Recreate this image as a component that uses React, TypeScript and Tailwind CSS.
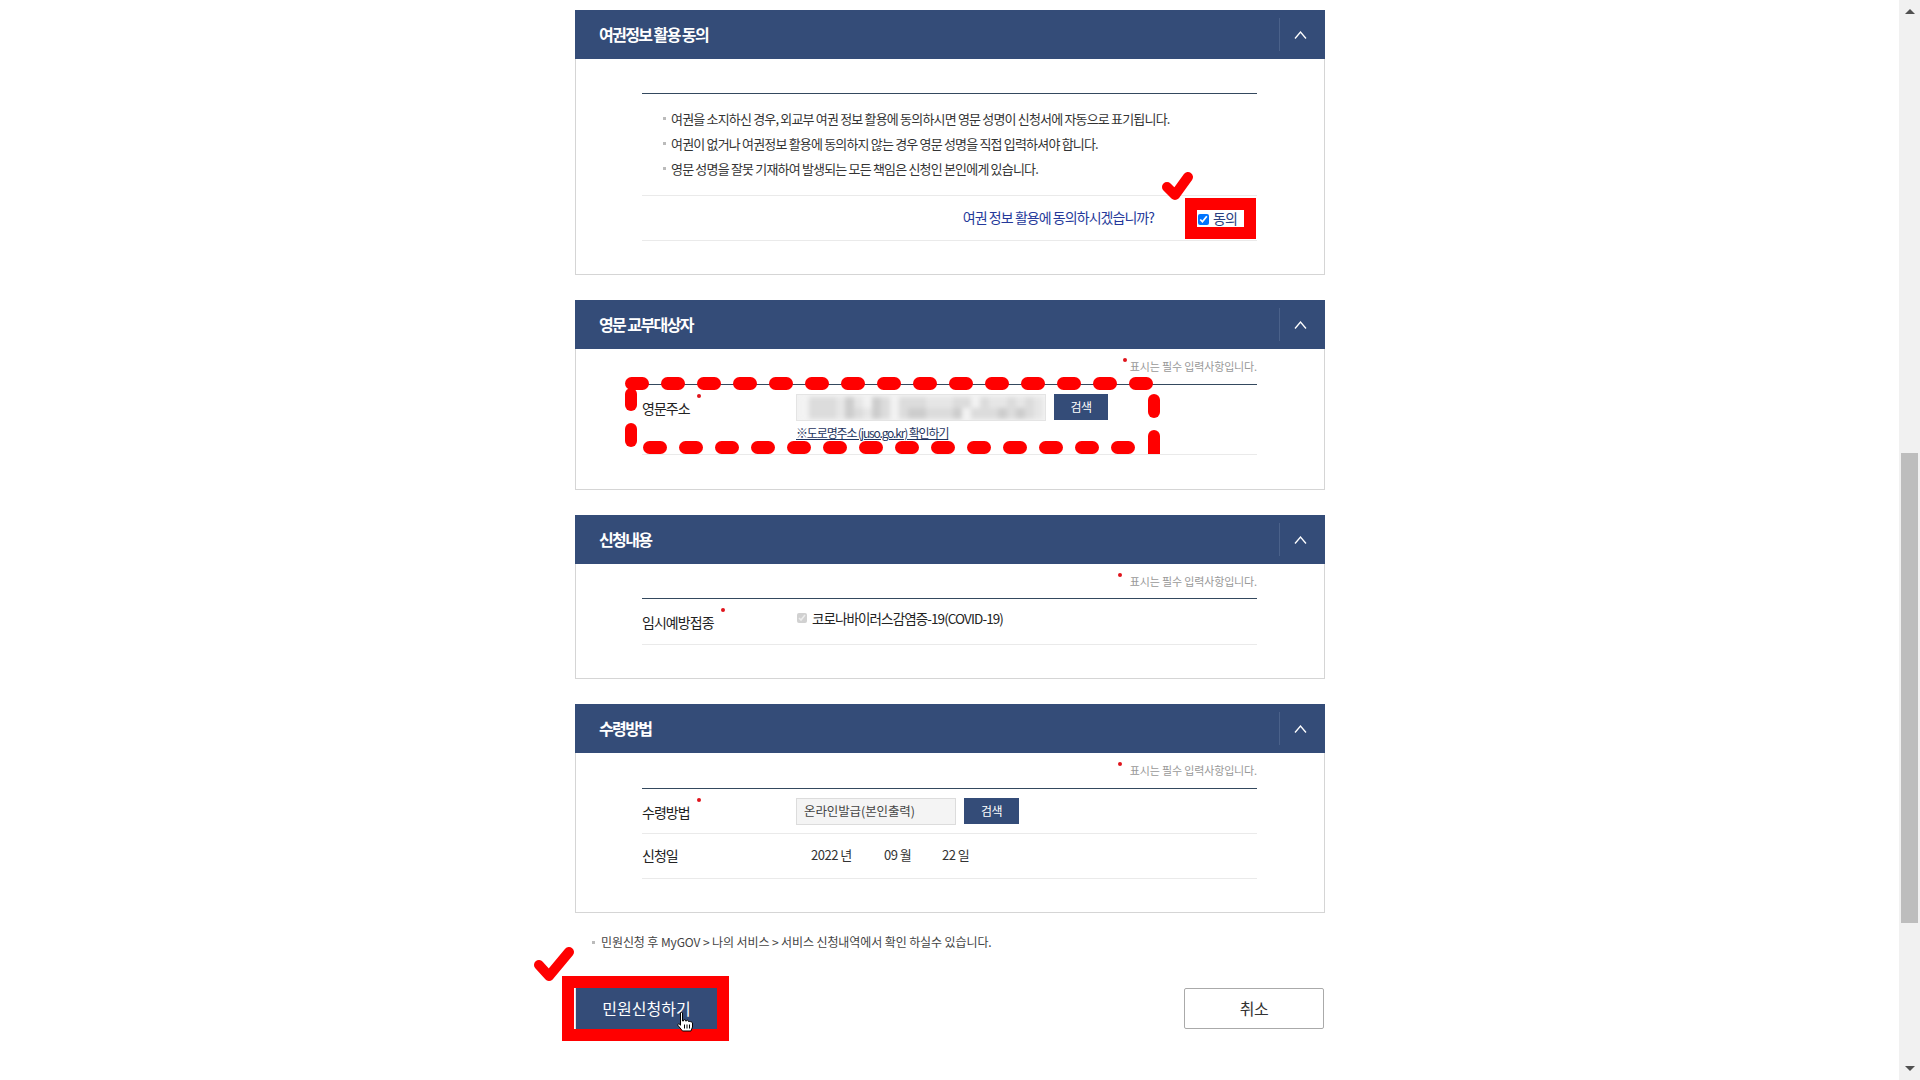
import React from 'react';

const NAVY = 'bg-[#344c78]';

const tone: Record<string, string> = {
  a: 'bg-[#f2f2f2]',
  b: 'bg-[#e6e6e6]',
  c: 'bg-[#dcdcdc]',
  d: 'bg-[#cdcdcd]',
};
const blurRows = ['acccbdbadcacccbbbccacbbcbcba', 'acccbdcbdcacddcccdacccdcdcba'];

function Panel({ title, children }: { title: string; children: React.ReactNode }) {
  return (
    <section className="w-[750px] mx-auto mb-[25px]">
      <div className={`${NAVY} h-[49px] flex items-center justify-between`}>
        <h2 className="pl-6 pb-[2px] text-[16px] font-bold tracking-[-1.6px] text-white">{title}</h2>
        <div className="h-[33px] w-[46px] pr-[5px] border-l border-[#4a618a] flex items-center justify-center">
          <svg width="13" height="8" viewBox="0 0 13 8" fill="none" stroke="#fff" strokeWidth="1.3">
            <path d="M1 7.5L6.5 1L12 7.5" />
          </svg>
        </div>
      </div>
      <div className="border border-t-0 border-[#d5d5d5] pl-[66px] pr-[67px]">{children}</div>
    </section>
  );
}

function RequiredNote({ dotClass, height }: { dotClass: string; height: string }) {
  return (
    <div className={`${height} flex justify-end pt-[9px]`}>
      <span className="relative h-[16px] text-[11px] leading-[16px] tracking-[-0.14px] text-[#999]">
        <span className={`absolute top-[0px] w-[4px] h-[4px] rounded-full bg-[#e0141c] ${dotClass}`} />
        표시는 필수 입력사항입니다.
      </span>
    </div>
  );
}

function Label({ text, dotClass, className = '' }: { text: string; dotClass: string; className?: string }) {
  return (
    <span className={`relative w-[154px] shrink-0 text-[14px] leading-[20px] tracking-[-0.95px] text-[#222] ${className}`}>
      {text}
      {dotClass && <span className={`absolute top-[-4px] w-[4px] h-[4px] rounded-full bg-[#e0141c] ${dotClass}`} />}
    </span>
  );
}

function SearchButton({ className }: { className: string }) {
  return (
    <button className={`${NAVY} h-[26px] text-[12px] tracking-[-0.6px] text-white ${className}`}>검색</button>
  );
}

function Bullet({ text }: { text: string }) {
  return (
    <li className="h-[25px] flex items-center gap-[5px] pl-[21px] text-[13px] tracking-[-0.82px] text-[#333]">
      <span className="w-[3px] h-[3px] bg-[#bbb]" />
      {text}
    </li>
  );
}

function Check({ className, box, d }: { className: string; box: string; d: string }) {
  return (
    <svg className={`absolute ${className}`} viewBox={box} fill="none" stroke="#f00" strokeWidth="10" strokeLinecap="round" strokeLinejoin="round">
      <path d={d} />
    </svg>
  );
}

export default function App() {
  return (
    <div className="relative h-screen overflow-hidden flex bg-white font-['Noto_Sans_CJK_KR','Noto_Sans',sans-serif]">
      <main className="flex-1 pt-[10px] pl-px">
        <Panel title="여권정보 활용 동의">
          <div className="pt-[34px]">
            <div className="border-t border-[#34495e] pt-[12px]">
              <ul className="pb-[14px]">
                <Bullet text="여권을 소지하신 경우, 외교부 여권 정보 활용에 동의하시면 영문 성명이 신청서에 자동으로 표기됩니다." />
                <Bullet text="여권이 없거나 여권정보 활용에 동의하지 않는 경우 영문 성명을 직접 입력하셔야 합니다." />
                <Bullet text="영문 성명을 잘못 기재하여 발생되는 모든 책임은 신청인 본인에게 있습니다." />
              </ul>
              <div className="h-[46px] border-y border-[#eaeaea] flex items-center justify-end mb-[33px]">
                <span className="mr-[31px] pb-[2px] text-[14px] tracking-[-0.95px] text-[#25399a]">여권 정보 활용에 동의하시겠습니까?</span>
                <span className="relative z-10 mr-px w-[71px] h-[41px] bg-[#f00] flex items-center justify-center">
                  <span className="w-[47px] h-[17px] bg-white flex items-center gap-[4px] text-[14px] tracking-[-1px] text-[#2a4080]">
                    <input type="checkbox" defaultChecked className="w-[11px] h-[11px] ml-[1px] mt-[2px] accent-[#0075ff]" />
                    동의
                  </span>
                </span>
              </div>
            </div>
          </div>
        </Panel>

        <Panel title="영문 교부대상자">
          <RequiredNote dotClass="left-[-7px]" height="h-[35px]" />
          <div className="h-[71px] border-y border-[#34495e] border-b-[#eaeaea] flex pt-[9px]">
            <Label text="영문주소" dotClass="left-[55px]" className="mt-[4px]" />
            <div>
              <div className="flex gap-[8px]">
                <div className="w-[250px] h-[27px] border border-[#e4e4e4] bg-[#f3f3f3] overflow-hidden flex items-center pl-[3px]">
                  <div className="flex flex-col blur-[2px]">
                    {blurRows.map((row, r) => (
                      <div key={r} className="flex">
                        {row.split('').map((c, i) => (
                          <div key={i} className={`w-[9px] h-[11px] ${tone[c]}`} />
                        ))}
                      </div>
                    ))}
                  </div>
                </div>
                <SearchButton className="w-[54px]" />
              </div>
              <a className="block mt-[3px] text-[12px] leading-[18px] tracking-[-1.15px] text-[#1f3560] underline">※도로명주소 (juso.go.kr) 확인하기</a>
            </div>
          </div>
          <div className="h-[34px]" />
        </Panel>

        <Panel title="신청내용">
          <RequiredNote dotClass="left-[-12px]" height="h-[34px]" />
          <div className="h-[47px] border-y border-[#34495e] border-b-[#eaeaea] flex items-start pt-[9px]">
            <Label text="임시예방접종" dotClass="left-[79px]" className="mt-[4px]" />
            <label className="flex items-center gap-[5px] text-[13.5px] tracking-[-0.9px] text-[#222]">
              <input type="checkbox" defaultChecked disabled className="w-[10px] h-[10px] ml-[1px]" />
              코로나바이러스감염증-19(COVID-19)
            </label>
          </div>
          <div className="h-[33px]" />
        </Panel>

        <Panel title="수령방법">
          <RequiredNote dotClass="left-[-12px]" height="h-[35px]" />
          <div className="h-[46px] border-y border-[#34495e] border-b-[#eaeaea] flex items-start pt-[9px]">
            <Label text="수령방법" dotClass="left-[55px]" className="mt-[4px]" />
            <div className="flex gap-[8px]">
              <div className="w-[160px] h-[27px] border border-[#dcdcdc] bg-[#f4f4f4] pl-[7px] text-[12.5px] leading-[24px] tracking-[-0.1px] text-[#444]">온라인발급(본인출력)</div>
              <SearchButton className="w-[55px]" />
            </div>
          </div>
          <div className="h-[45px] pb-[2px] border-b border-[#eaeaea] flex items-center">
            <Label text="신청일" dotClass="" />
            <div className="flex pl-[15px] text-[13px] tracking-[-0.5px] text-[#333]">
              <span className="w-[73px]">2022 년</span>
              <span className="w-[58px]">09 월</span>
              <span>22 일</span>
            </div>
          </div>
          <div className="h-[33px]" />
        </Panel>

        <div className="w-[750px] mx-auto">
          <p className="-mt-[4px] h-[16px] flex items-center gap-[6px] pl-[17px] text-[12px] tracking-[-0.1px] text-[#444]">
            <span className="w-[3px] h-[3px] bg-[#bbb]" />
            민원신청 후 MyGOV &gt; 나의 서비스 &gt; 서비스 신청내역에서 확인 하실수 있습니다.
          </p>
          <div className="mt-[38px] flex justify-between pr-px">
            <button className={`${NAVY} w-[143px] h-[41px] pb-[2px] border-x border-[#dfe4ec] text-[16px] text-white`}>민원신청하기</button>
            <button className="w-[140px] h-[41px] pb-[2px] rounded-[2px] border border-[#aaa] bg-white text-[16px] tracking-[-0.4px] text-[#333]">취소</button>
          </div>
        </div>
      </main>

      {/* scrollbar */}
      <div className="w-[21px] bg-[#f1f1f1] flex flex-col items-center">
        <div className="h-[453px] w-full pt-[9px] flex justify-center">
          <svg width="10" height="5" viewBox="0 0 10 5"><path d="M5 0L10 5H0Z" fill="#505050" /></svg>
        </div>
        <div className="w-[17px] h-[470px] bg-[#bdbdbd]" />
        <div className="flex-1 w-full flex items-end justify-center pb-[9px]">
          <svg width="10" height="5" viewBox="0 0 10 5"><path d="M5 5L10 0H0Z" fill="#505050" /></svg>
        </div>
      </div>

      {/* red annotations painted over the page */}
      <Check className="left-[1158px] top-[170px] w-[36px] h-[30px]" box="0 0 36 30" d="M9 17L17 25L30 7" />
      <svg className="absolute left-[625px] top-[377px]" width="536" height="77" viewBox="0 0 536 77" fill="#f00">
        {Array.from({ length: 15 }, (_, i) => (
          <rect key={i} x={i * 36} y="0" width="24" height="13" rx="6.5" />
        ))}
        {Array.from({ length: 14 }, (_, i) => (
          <rect key={i} x={18 + i * 36} y="64" width="24" height="13" rx="6.5" />
        ))}
        <rect x="0" y="11" width="12" height="23" rx="6" />
        <rect x="0" y="46" width="12" height="24" rx="6" />
        <rect x="523" y="17" width="12" height="24" rx="6" />
        <path d="M523 59a6 6 0 0 1 12 0V77H523Z" />
      </svg>
      <Check className="left-[533px] top-[946px] w-[42px] h-[36px]" box="0 0 42 36" d="M6 19L16 30L36 6" />
      <div className="absolute left-[562px] top-[976px] w-[167px] h-[65px] border-[12px] border-[#f00]" />
      <svg className="absolute left-[677px] top-[1012px]" width="17" height="20" viewBox="0 0 17 20">
        <path d="M3.5 1C3.5 0 5.5 0 5.5 1V9H6.5V8C7.5 7.5 8.5 7.5 8.5 8.5V9H9.5V8.5C10.5 8 11.5 8.3 11.5 9.2V9.5H12.5C13.5 9.5 15.5 10 15.5 11V15L14 19H5.5L1 13.5C.3 12.5 1.2 11.5 2.2 12L3.5 13.2Z" fill="#fff" stroke="#000" strokeWidth="1" />
        <path d="M7.5 12.5V16.5M10 12.5V16.5M12.5 12.5V16.5" stroke="#000" strokeWidth="1" />
      </svg>
    </div>
  );
}
